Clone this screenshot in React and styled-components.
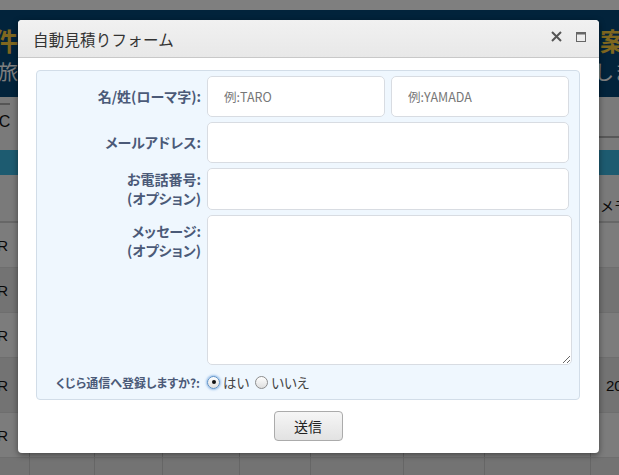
import React from "react";
import styled, { createGlobalStyle } from "styled-components";

const GlobalStyle = createGlobalStyle`
  html, body { margin: 0; padding: 0; }
  body {
    background: #ffffff;
    overflow: hidden;
    font-family: "Noto Sans CJK JP", "Noto Sans", sans-serif;
  }
  * { box-sizing: border-box; }
`;

const Page = styled.div`
  position: relative;
  width: 619px;
  height: 475px;
  overflow: hidden;
  background: #ffffff;
`;

const TopStrip = styled.div`
  height: 10px;
  background: #ffffff;
`;

const Header = styled.header`
  height: 87px;
  background: #044676;
  display: flex;
  flex-direction: column;
  padding-top: 16px;
  gap: 6px;
`;

const HeadLine = styled.div`
  display: flex;
  justify-content: space-between;
  font-size: 25px;
  font-weight: 700;
  line-height: 28px;
  color: #ffcf3e;
  margin-left: -7px;
  margin-right: -31px;
`;

const SubLine = styled.div`
  display: flex;
  justify-content: space-between;
  font-size: 20px;
  line-height: 24px;
  color: #ffffff;
  margin-left: -2px;
  margin-right: -15px;
`;

const Toolbar = styled.div`
  height: 53px;
  background: #f4f4f4;
  display: flex;
  justify-content: space-between;
  align-items: flex-start;
`;

const TabBox = styled.div`
  margin-top: 6px;
  margin-left: -11px;
  height: 38px;
  border-top: 2px solid #aaaaaa;
  padding-top: 8px;
  font-family: "Liberation Sans", sans-serif;
  font-size: 16px;
  color: #111;
`;

const RightRule = styled.div`
  margin-top: 39px;
  width: 20px;
  border-bottom: 2px solid #b0b0b0;
`;

const Band = styled.div`
  height: 25px;
  background: #3ab6e0;
`;

const Table = styled.div`
  display: grid;
  grid-template-columns: 48px 65px 68px 77px 71px 93px 81px 106px 60px;
  margin-left: -18px;
`;

const HeadCell = styled.div`
  height: 48px;
  background: #f4f4f4;
  border-bottom: 2px solid #cfcfcf;
  font-size: 14px;
  color: #111;
  display: flex;
  align-items: flex-end;
  padding: 0 0 6px 9px;
  white-space: nowrap;
  overflow: hidden;
`;

const Cell = styled.div`
  height: ${(p) => p.$h}px;
  background: ${(p) => (p.$alt ? "#e6e6e6" : "#f8f8f8")};
  border-right: 1px solid #cccccc;
  border-bottom: 1px solid #dddddd;
  font-family: "Liberation Sans", sans-serif;
  font-size: 15px;
  color: #111;
  display: flex;
  align-items: center;
  justify-content: ${(p) => (p.$end ? "flex-end" : "flex-start")};
  padding: ${(p) => (p.$end ? "0 21px 0 0" : "0 0 0 15px")};
  white-space: nowrap;
  overflow: hidden;
`;

const Overlay = styled.div`
  position: absolute;
  inset: 0;
  background: rgba(0, 0, 0, 0.5);
`;

const Modal = styled.div`
  position: absolute;
  left: 18px;
  top: 20px;
  width: 581px;
  background: #ffffff;
  border-radius: 4px;
  box-shadow: 0 2px 6px rgba(0, 0, 0, 0.45);
  overflow: hidden;
`;

const TitleBar = styled.div`
  height: 38px;
  background: linear-gradient(#f1f1f1, #e8e8e8);
  border-bottom: 1px solid #c8c8c8;
  display: flex;
  align-items: center;
  justify-content: space-between;
  padding: 0 13px 0 15px;
`;

const Title = styled.h1`
  margin: 0;
  font-size: 15.5px;
  font-weight: 400;
  color: #333333;
  letter-spacing: 0.2px;
`;

const TitleActions = styled.div`
  display: flex;
  align-items: center;
  gap: 14px;
  margin-top: -4px;
`;

const IconButton = styled.button`
  border: 0;
  padding: 0;
  background: none;
  display: flex;
  cursor: pointer;
`;

const Body = styled.div`
  padding: 12px 19px 12px 18px;
  display: flex;
  flex-direction: column;
  align-items: stretch;
  gap: 11px;
`;

const Fieldset = styled.div`
  border: 1px solid #d2dde8;
  background: #eff7fe;
  border-radius: 4px;
  padding: 5px 10px 8px 0;
  display: grid;
  grid-template-columns: 164px 1fr;
  column-gap: 6px;
  row-gap: 5px;
`;

const Label = styled.label`
  text-align: right;
  font-size: 14px;
  font-weight: 700;
  line-height: 19px;
  color: #4b5a78;
  font-feature-settings: "palt";
  align-self: ${(p) => (p.$top ? "start" : "center")};
  padding-top: ${(p) => (p.$top ? "7px" : "0")};
`;

const Pair = styled.div`
  display: grid;
  grid-template-columns: 1fr 1fr;
  gap: 6px;
`;

const Input = styled.input`
  height: ${(p) => p.$h || 41}px;
  width: 100%;
  border: 1px solid #d8dce2;
  border-radius: 5px;
  background: #ffffff;
  padding: 0 16px;
  font-family: "Noto Sans CJK JP", "Noto Sans", sans-serif;
  font-size: 12.5px;
  color: #333;
  outline: none;
  &::placeholder { color: #777777; }
`;

const TextArea = styled.textarea`
  height: 150px;
  width: calc(100% + 3px);
  border: 1px solid #d8dce2;
  border-radius: 5px;
  background: #ffffff;
  padding: 8px 16px;
  font-family: "Noto Sans CJK JP", "Noto Sans", sans-serif;
  font-size: 13px;
  outline: none;
  display: block;
`;

const QuestionLabel = styled.span`
  text-align: right;
  font-size: 12px;
  font-weight: 700;
  color: #4b5a78;
  font-feature-settings: "palt";
  padding-right: 1px;
  align-self: center;
  margin-top: 3px;
`;

const RadioGroup = styled.div`
  display: flex;
  align-items: center;
  margin-top: 3px;
  height: 18px;
`;

const RadioOption = styled.label`
  display: flex;
  align-items: center;
  gap: 3px;
  margin-right: 6px;
  font-size: 13.5px;
  color: #444;
  font-feature-settings: "palt";
`;

const RadioCircle = styled.span`
  width: 13px;
  height: 13px;
  border-radius: 50%;
  border: 1px solid ${(p) => (p.$on ? "#5b8fc4" : "#8c8c8c")};
  background: linear-gradient(#ffffff, #dedede);
  box-shadow: ${(p) => (p.$on ? "0 0 2px 1px rgba(90,150,220,0.55)" : "none")};
  display: flex;
  align-items: center;
  justify-content: center;
  &::after {
    content: "";
    width: 4px;
    height: 4px;
    border-radius: 50%;
    background: #111;
    display: ${(p) => (p.$on ? "block" : "none")};
  }
`;

const Footer = styled.div`
  display: flex;
  justify-content: center;
`;

const SubmitButton = styled.button`
  width: 69px;
  height: 30px;
  border: 1px solid #ababab;
  border-radius: 4px;
  background: linear-gradient(#f6f6f6, #e2e2e2);
  font-family: "Noto Sans CJK JP", sans-serif;
  font-size: 14px;
  color: #222;
  cursor: pointer;
`;

const rows = [
  { h: 45, alt: false, first: "EUR", last: "" },
  { h: 45, alt: true, first: "EUR", last: "" },
  { h: 45, alt: false, first: "EUR", last: "" },
  { h: 55, alt: true, first: "EUR", last: "2016" },
  { h: 45, alt: false, first: "EUR", last: "" },
  { h: 45, alt: true, first: "", last: "" },
];

function Radio({ checked, children }) {
  return (
    <RadioOption>
      <RadioCircle $on={checked} />
      {children}
    </RadioOption>
  );
}

export default function App() {
  return (
    <>
      <GlobalStyle />
      <Page>
        <TopStrip />
        <Header>
          <HeadLine>
            <span>件</span>
            <span>案内</span>
          </HeadLine>
          <SubLine>
            <span>旅行</span>
            <span>しま</span>
          </SubLine>
        </Header>
        <Toolbar>
          <TabBox>TC</TabBox>
          <RightRule />
        </Toolbar>
        <Band />
        <Table>
          {["", "", "", "", "", "", "", "", "メモ"].map((t, i) => (
            <HeadCell key={"h" + i}>{t}</HeadCell>
          ))}
          {rows.map((r, ri) =>
            Array.from({ length: 9 }).map((_, ci) => (
              <Cell key={ri + "-" + ci} $h={r.h} $alt={r.alt} $end={ci === 0}>
                {ci === 0 ? r.first : ci === 8 ? r.last : ""}
              </Cell>
            ))
          )}
        </Table>
        <Overlay />
        <Modal role="dialog">
          <TitleBar>
            <Title>自動見積りフォーム</Title>
            <TitleActions>
              <IconButton aria-label="閉じる">
                <svg width="11" height="11" viewBox="0 0 11 11">
                  <path d="M1 1 L10 10 M10 1 L1 10" stroke="#555" strokeWidth="2" />
                </svg>
              </IconButton>
              <IconButton aria-label="最大化">
                <svg width="10" height="10" viewBox="0 0 10 10">
                  <rect x="0.5" y="0.5" width="9" height="9" fill="none" stroke="#666" strokeWidth="1" />
                  <rect x="0" y="0" width="10" height="2.5" fill="#666" />
                </svg>
              </IconButton>
            </TitleActions>
          </TitleBar>
          <Body>
            <Fieldset>
              <Label>名/姓(ローマ字):</Label>
              <Pair>
                <Input placeholder="例:TARO" />
                <Input placeholder="例:YAMADA" />
              </Pair>
              <Label>メールアドレス:</Label>
              <Input />
              <Label>
                お電話番号:
                <br />
                (オプション)
              </Label>
              <Input $h={42} />
              <Label $top>
                メッセージ:
                <br />
                (オプション)
              </Label>
              <TextArea />
              <QuestionLabel>くじら通信へ登録しますか?:</QuestionLabel>
              <RadioGroup>
                <Radio checked>はい</Radio>
                <Radio>いいえ</Radio>
              </RadioGroup>
            </Fieldset>
            <Footer>
              <SubmitButton>送信</SubmitButton>
            </Footer>
          </Body>
        </Modal>
      </Page>
    </>
  );
}
